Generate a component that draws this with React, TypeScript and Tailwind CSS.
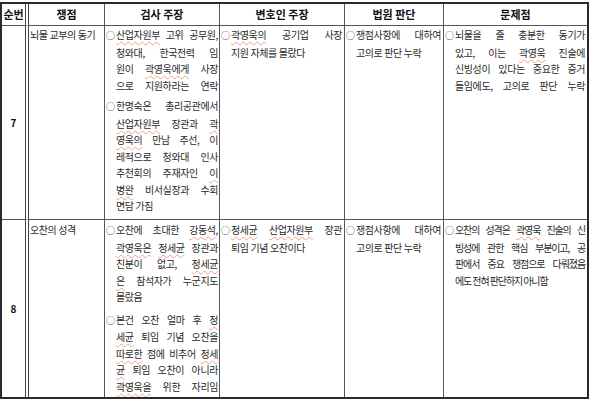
import React from "react";

const U = ({ children }: { children: React.ReactNode }) => (
  <span className="underline decoration-wavy decoration-[#f0a084] decoration-1 underline-offset-[2px]">
    {children}
  </span>
);

const O = () => (
  <span className="inline-block w-[10px] text-left text-[9px] tracking-normal text-[#444]">○</span>
);

const L = ({
  children,
  j = true,
  first = false,
}: {
  children: React.ReactNode;
  j?: boolean;
  first?: boolean;
}) => (
  <div
    className={
      (j ? "text-justify [text-align-last:justify] " : "text-left ") +
      "whitespace-nowrap " +
      (first ? "-ml-[10px]" : "")
    }
  >
    {first && <O />}
    {children}
  </div>
);

const P = ({ children, cls = "" }: { children: React.ReactNode; cls?: string }) => (
  <div className={"pl-[10px] " + cls}>{children}</div>
);

const head = "flex items-center justify-center font-bold text-[11px] text-[#111] border-b border-[#555]";
const body = "pl-[1px] pr-[1px] pt-[1px] text-[10px] tracking-[-0.4px] leading-[16.5px] text-[#2a2a2a]";

export default function App() {
  return (
    <div className="w-[590px] h-[401px] bg-white pt-[2px] font-['Noto_Sans_CJK_KR',sans-serif]">
      <div className="grid w-[589px] grid-cols-[27px_76px_115px_125px_99px_143px] grid-rows-[22px_194px_177px] border-2 border-[#2a2a2a]">
        {/* header */}
        <div className={head + " border-r-4 border-double border-r-[#444]"}>순번</div>
        <div className={head + " border-r"}>쟁점</div>
        <div className={head + " border-r"}>검사 주장</div>
        <div className={head + " border-r"}>변호인 주장</div>
        <div className={head + " border-r"}>법원 판단</div>
        <div className={head}>문제점</div>

        {/* row 7 */}
        <div className="flex items-center justify-center font-bold text-[10px] text-[#111] border-r-4 border-double border-r-[#444] border-b border-b-[#555]">
          7
        </div>
        <div className={body + " border-r border-b border-[#555]"}>
          <L j={false}>뇌물 교부의 동기</L>
        </div>
        <div className={body + " border-r border-b border-[#555]"}>
          <P>
            <L first>
              <U>산업자원부</U> 고위 공무원,
            </L>
            <L>청와대, 한국전력 임</L>
            <L>
              원이 <U>곽영욱에게</U> 사장
            </L>
            <L>으로 지원하라는 연락</L>
          </P>
          <P cls="mt-[4px]">
            <L first>한명숙은 총리공관에서</L>
            <L>
              <U>산업자원부</U> 장관과 <U>곽</U>
            </L>
            <L>
              <U>영욱의</U> 만남 주선, 이
            </L>
            <L>레적으로 청와대 인사</L>
            <L>
              추천회의 주재자인 <U>이</U>
            </L>
            <L>
              <U>병완</U> 비서실장과 수회
            </L>
            <L j={false}>면담 가짐</L>
          </P>
        </div>
        <div className={body + " pr-[2px] border-r border-b border-[#555]"}>
          <P>
            <L first>
              <U>곽영욱의</U> 공기업 사장
            </L>
            <L j={false}>지원 자체를 몰랐다</L>
          </P>
        </div>
        <div className={body + " pr-[2px] border-r border-b border-[#555]"}>
          <P>
            <L first>쟁점사항에 대하여</L>
            <L j={false}>고의로 판단 누락</L>
          </P>
        </div>
        <div className={body + " pr-[2px] border-b border-[#555]"}>
          <P>
            <L first>뇌물을 줄 충분한 동기가</L>
            <L>
              있고, 이는 <U>곽영욱</U> 진술에
            </L>
            <L>신빙성이 있다는 중요한 증거</L>
            <L>들임에도, 고의로 판단 누락</L>
          </P>
        </div>

        {/* row 8 */}
        <div className="flex items-center justify-center font-bold text-[10px] text-[#111] border-r-4 border-double border-r-[#444]">
          8
        </div>
        <div className={body + " pt-[2px] border-r border-[#555]"}>
          <L j={false}>오찬의 성격</L>
        </div>
        <div className={body + " pt-[2px] border-r border-[#555]"}>
          <P>
            <L first>
              오찬에 초대한 <U>강동석</U>,
            </L>
            <L>
              <U>곽영욱은</U> <U>정세균</U> 장관과
            </L>
            <L>
              친분이 없고, <U>정세균</U>
            </L>
            <L>
              <U>은</U> 참석자가 누군지도
            </L>
            <L j={false}>몰랐음</L>
          </P>
          <P cls="mt-[6px]">
            <L first>
              본건 오찬 얼마 후 <U>정</U>
            </L>
            <L>
              <U>세균</U> 퇴임 기념 오찬을
            </L>
            <L>
              <U>따로한</U> 점에 비추어 <U>정세</U>
            </L>
            <L>
              <U>균</U> 퇴임 오찬이 아니라
            </L>
            <L>
              <U>곽영욱을</U> 위한 자리임
            </L>
          </P>
        </div>
        <div className={body + " pt-[2px] pr-[2px] border-r border-[#555]"}>
          <P>
            <L first>
              <U>정세균</U> <U>산업자원부</U> 장관
            </L>
            <L j={false}>퇴임 기념 오찬이다</L>
          </P>
        </div>
        <div className={body + " pt-[2px] pr-[2px] border-r border-[#555]"}>
          <P>
            <L first>쟁점사항에 대하여</L>
            <L j={false}>고의로 판단 누락</L>
          </P>
        </div>
        <div className={body + " pt-[2px] pr-[2px] tracking-[-1.1px]"}>
          <P>
            <L first>
              오찬의 성격은 <U>곽영욱</U> 진술의 신
            </L>
            <L>빙성에 관한 핵심 부분이고, 공</L>
            <L>판에서 중요 쟁점으로 다뤄졌음</L>
            <L j={false}>에도 전혀 판단하지 아니함</L>
          </P>
        </div>
      </div>
    </div>
  );
}
